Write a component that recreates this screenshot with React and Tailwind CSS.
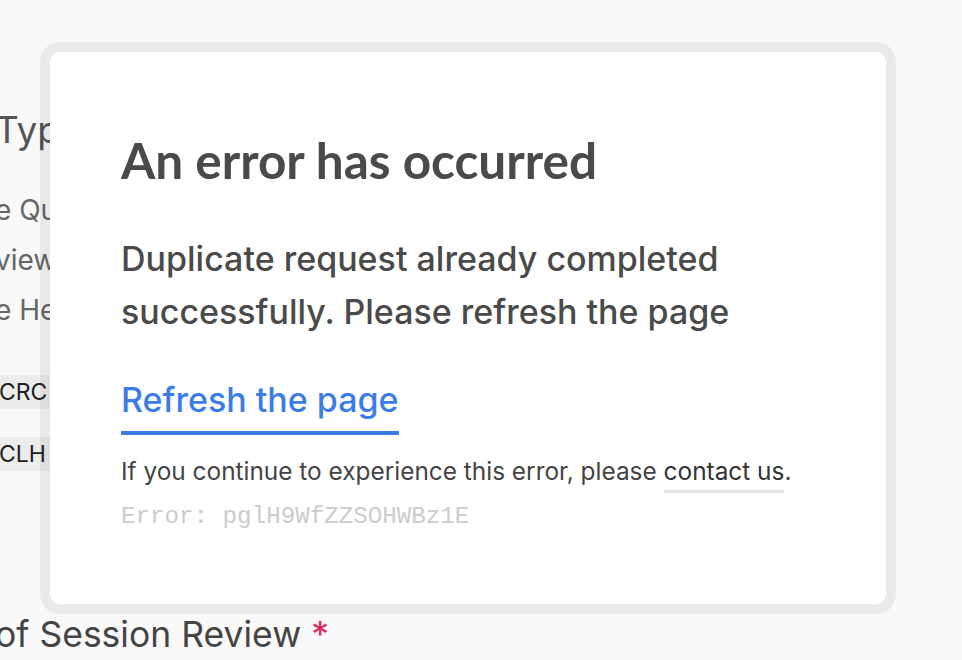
export default function App() {
  return (
    <div className="relative w-[962px] h-[660px] overflow-hidden bg-[#f9f9f9] font-['Inter',sans-serif]">
      {/* page behind the dialog */}
      <div className="flex flex-col -ml-[5px] text-[#555]">
        <div className="mt-[106px] text-[37px] leading-[48px]">Type</div>
        <div className="mt-[31px] text-[28px] leading-[50px] text-[#666]">
          <div>e Questions</div>
          <div>view</div>
          <div>e Help</div>
        </div>
        <div className="mt-[40px] flex flex-col gap-[28px] items-start">
          <span className="rounded-[4px] bg-[#ececec] pl-[4px] pr-[8px] text-[23px] leading-[34px] text-[#222]">CRC</span>
          <span className="rounded-[4px] bg-[#ececec] pl-[4px] pr-[8px] text-[23px] leading-[34px] text-[#222]">CLH</span>
        </div>
        <div className="mt-[140px] text-[35.5px] leading-[48px] text-[#444]">
          of Session Review <span className="text-[#e0245e]">*</span>
        </div>
      </div>

      {/* error dialog */}
      <div className="absolute left-[40px] top-[42px] w-[856px] h-[572px] rounded-[20px] border-[10px] border-black/[0.06] bg-white bg-clip-padding">
        <div className="px-[71px] pt-[80px]">
          <h1 className="font-['Lato',sans-serif] font-bold text-[49.5px] leading-[56px] text-[#4a4a4a]">
            An error has occurred
          </h1>
          <p className="mt-[44px] w-[660px] text-[34px] leading-[53px] font-medium text-[#4a4a4a]">
            Duplicate request already completed successfully. Please refresh the page
          </p>
          <a className="mt-[40px] inline-block border-b-[4px] border-[#3b7de8] pb-[9px] text-[34px] leading-[44px] font-medium text-[#3b7de8]">
            Refresh the page
          </a>
          <p className="mt-[20px] text-[24.4px] leading-[32px] text-[#444]">
            If you continue to experience this error, please{' '}
            <span className="border-b-[3px] border-[#e6e6e6] pb-[4px] text-[#333]">contact us</span>.
          </p>
          <div className="mt-[14px] font-['Liberation_Mono',monospace] text-[24.2px] leading-[32px] text-[#cccccc]">
            Error: pglH9WfZZSOHWBz1E
          </div>
        </div>
      </div>
    </div>
  );
}
